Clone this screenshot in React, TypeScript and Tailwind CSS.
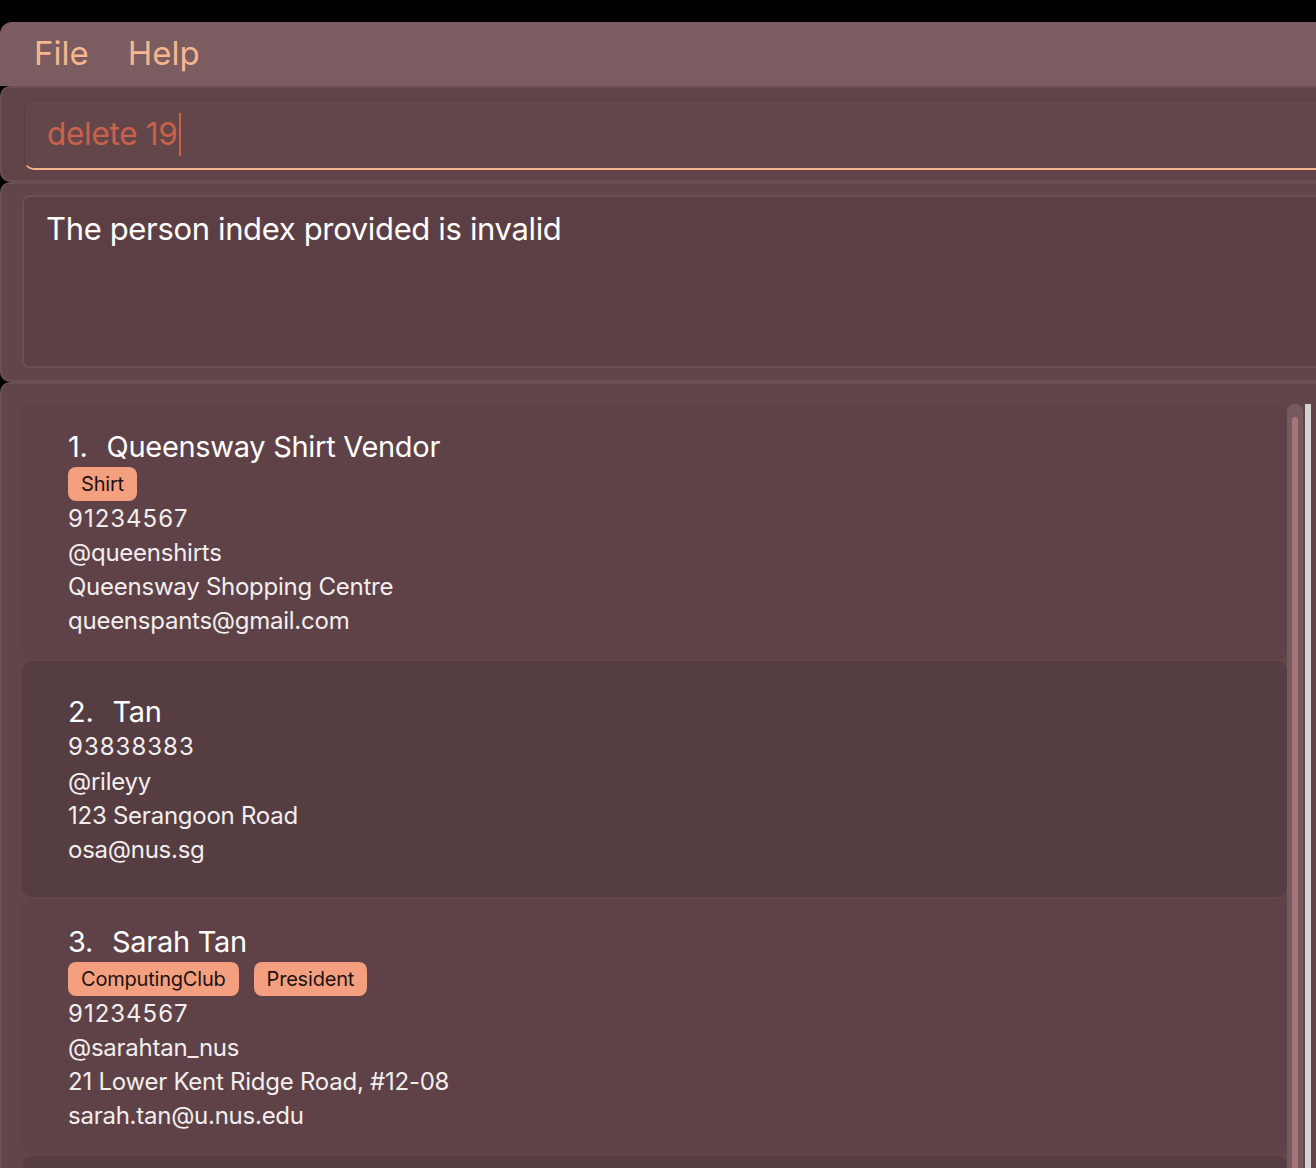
const persons = [
  {
    name: "Queensway Shirt Vendor",
    tags: ["Shirt"],
    phone: "91234567",
    handle: "@queenshirts",
    address: "Queensway Shopping Centre",
    email: "queenspants@gmail.com",
  },
  {
    name: "Tan",
    tags: [] as string[],
    phone: "93838383",
    handle: "@rileyy",
    address: "123 Serangoon Road",
    email: "osa@nus.sg",
  },
  {
    name: "Sarah Tan",
    tags: ["ComputingClub", "President"],
    phone: "91234567",
    handle: "@sarahtan_nus",
    address: "21 Lower Kent Ridge Road, #12-08",
    email: "sarah.tan@u.nus.edu",
  },
];

function PersonCard({ p, i }: { p: (typeof persons)[number]; i: number }) {
  const odd = i % 2 === 0;
  const hasTags = p.tags.length > 0;
  return (
    <div
      className={
        "rounded-[10px] pl-[46px] flex flex-col " +
        (odd ? "bg-[#5e4247] " : "bg-[#553d42] ") +
        (hasTags ? "pt-[26px] pb-[21px]" : "h-[236px] pt-[34px]")
      }
    >
      <div className="h-[34px] flex items-center text-[29px] text-white tracking-[-0.3px]">
        <span>{i + 1}.</span>
        <span className="ml-[19px]">{p.name}</span>
      </div>
      {hasTags ? (
        <div className="flex gap-[15px] mt-[3px] mb-[1px]">
          {p.tags.map((t) => (
            <span
              key={t}
              className="h-[34px] px-[13px] flex items-center rounded-[8px] bg-[#f4a080] text-[#1c1212] text-[20px] tracking-[-0.2px]"
            >
              {t}
            </span>
          ))}
        </div>
      ) : (
        <div className="h-[1px]" />
      )}
      {[p.phone, p.handle, p.address, p.email].map((line) => (
        <div
          key={line}
          className={
            "flex items-center text-[24px] text-[#f3eeee] " +
            (hasTags ? "h-[34px] " : "h-[34.4px] ") +
            (/^\d+$/.test(line) ? "tracking-[1px]" : "tracking-[-0.25px]")
          }
        >
          {line}
        </div>
      ))}
    </div>
  );
}

export default function App() {
  return (
    <div
      className="w-[1316px] h-[1168px] overflow-hidden bg-black flex flex-col"
      style={{ fontFamily: "Inter, 'Noto Sans', sans-serif" }}
    >
      <div className="h-[22px] shrink-0" />

      {/* Menu bar */}
      <div className="h-[64px] shrink-0 bg-[#7a5c61] rounded-tl-[12px] flex items-center pl-[14px] text-[33px] text-[#f6b68e]">
        <span className="px-[20px]">File</span>
        <span className="pl-[19px] pr-[20px]">Help</span>
      </div>

      {/* Command box */}
      <div className="h-[96px] shrink-0 w-[1340px] bg-[#604448] border-2 border-[#6b4f54] rounded-[10px] pt-[11px] pl-[22px]">
        <div className="h-[71px] bg-[#634649] border border-[#5a3e43] border-b-2 border-b-[#f4b48c] rounded-[10px] flex items-center pl-[22px] text-[31.5px] text-[#cb614b] tracking-[-0.3px]">
          <span>delete 19</span>
          <span className="w-[2px] h-[43px] bg-[#cb614b] ml-[1px]" />
        </div>
      </div>

      {/* Result display */}
      <div className="h-[200px] shrink-0 w-[1340px] bg-[#614549] border-2 border-[#6b4f54] rounded-[10px] pt-[11px] pl-[20px]">
        <div className="h-[173px] bg-[#5c3f44] border-2 border-[#6b4f54] rounded-[8px] pl-[22px] pt-[9px] text-[31px] text-white tracking-[-0.35px]">
          The person index provided is invalid
        </div>
      </div>

      {/* Person list */}
      <div className="flex-1 w-[1340px] bg-[#614549] border-2 border-[#6b4f54] rounded-[10px] pt-[20px] pl-[20px] flex">
        <div className="w-[1265px] flex flex-col gap-[2px]">
          {persons.map((p, i) => (
            <PersonCard key={p.name} p={p} i={i} />
          ))}
          <div className="h-[40px] rounded-[10px] bg-[#553d42]" />
        </div>
        <div className="w-[16px] bg-[#765a60] rounded-t-full flex justify-center pt-[13px]">
          <div className="w-[6px] h-full bg-[#a8757a] rounded-t-full" />
        </div>
        <div className="w-[6px] ml-[2px] bg-[#d3d3d3]" />
      </div>
    </div>
  );
}
